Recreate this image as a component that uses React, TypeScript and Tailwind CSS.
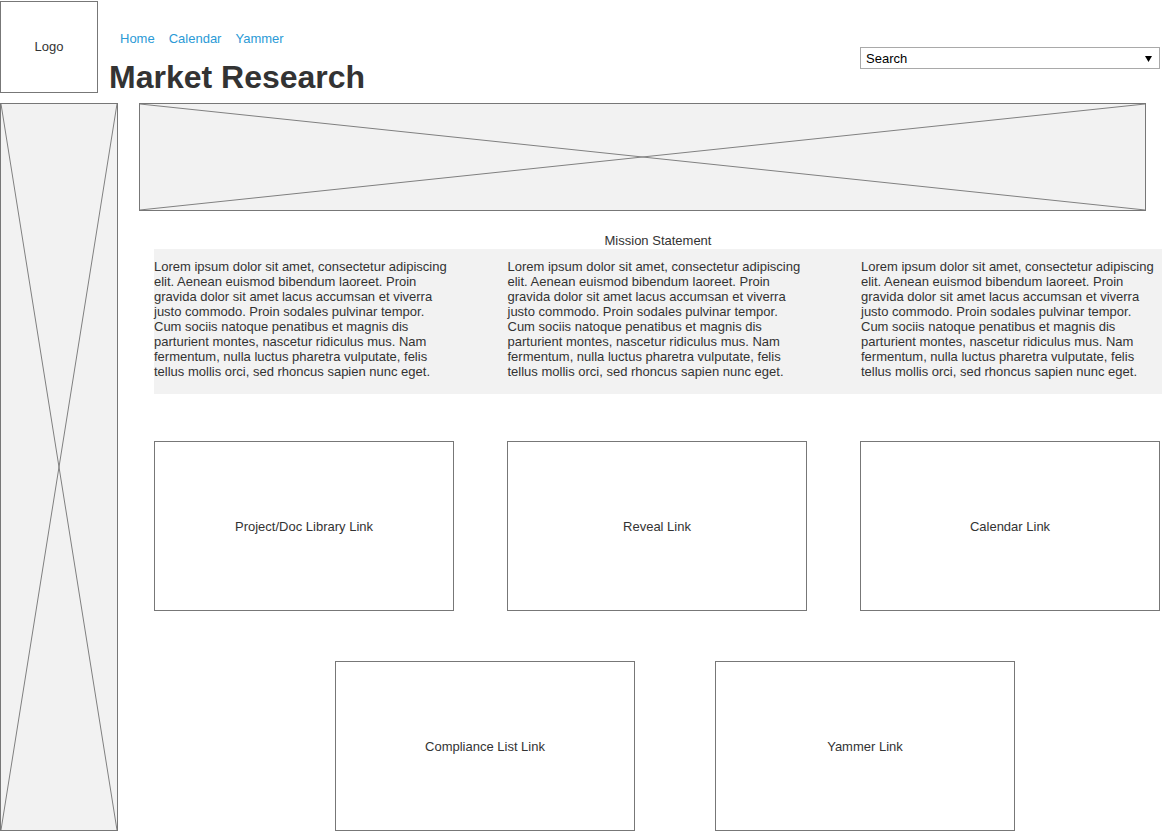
import React from "react"

const lorem =
  "Lorem ipsum dolor sit amet, consectetur adipiscing elit. Aenean euismod bibendum laoreet. Proin gravida dolor sit amet lacus accumsan et viverra justo commodo. Proin sodales pulvinar tempor. Cum sociis natoque penatibus et magnis dis parturient montes, nascetur ridiculus mus. Nam fermentum, nulla luctus pharetra vulputate, felis tellus mollis orci, sed rhoncus sapien nunc eget."

function Placeholder({ className }: { className: string }) {
  return (
    <div className={`relative border border-[#777] bg-[#f2f2f2] ${className}`}>
      <svg className="absolute inset-0 w-full h-full" viewBox="0 0 100 100" preserveAspectRatio="none">
        <line x1="0" y1="0" x2="100" y2="100" stroke="#808080" strokeWidth="1" vectorEffect="non-scaling-stroke" />
        <line x1="100" y1="0" x2="0" y2="100" stroke="#808080" strokeWidth="1" vectorEffect="non-scaling-stroke" />
      </svg>
    </div>
  )
}

function LinkBox({ label }: { label: string }) {
  return (
    <div className="w-[300px] h-[170px] border border-[#777] bg-white flex items-center justify-center pt-[2px] text-[13px]">
      {label}
    </div>
  )
}

export default function App() {
  return (
    <div className="w-[1162px] h-[833px] overflow-hidden bg-white text-[#333] font-['Liberation_Sans',Arial,sans-serif]">
      {/* header */}
      <div className="flex h-[103px]">
        <div className="mt-[1px] w-[98px] h-[92px] border border-[#777] flex items-center justify-center text-[13px]">
          Logo
        </div>
        <div className="ml-[11px] flex flex-col">
          <nav className="mt-[31px] ml-[11px] flex gap-[14px] text-[13px] leading-[15px] text-[#2b9ad6]">
            <a href="#">Home</a>
            <a href="#">Calendar</a>
            <a href="#">Yammer</a>
          </nav>
          <h1 className="mt-[13px] text-[32px] leading-[37px] font-bold">Market Research</h1>
        </div>
        <div className="ml-auto mr-[2px] mt-[47px] w-[300px] h-[22px] border border-[#a9a9a9] flex items-center justify-between pl-[5px] pr-[7px] pt-[1px] text-[13px] text-black">
          <span>Search</span>
          <svg width="7" height="6" viewBox="0 0 7 6">
            <path d="M0 0 L7 0 L3.5 6 Z" fill="#000" />
          </svg>
        </div>
      </div>

      {/* body */}
      <div className="flex">
        <Placeholder className="w-[118px] h-[728px] shrink-0" />
        <div className="ml-[21px] flex flex-col">
          <Placeholder className="w-[1007px] h-[108px]" />

          <div className="ml-[15px] w-[1008px]">
            <div className="mt-[22px] h-[16px] text-center text-[13px] leading-[15px]">Mission Statement</div>
            <div className="bg-[#f2f2f2] pt-[10px] pb-[15px] flex gap-[53.5px] text-[13px] leading-[15px]">
              <p className="w-[300px]">{lorem}</p>
              <p className="w-[300px]">{lorem}</p>
              <p className="w-[300px]">{lorem}</p>
            </div>

            <div className="mt-[47px] flex gap-[53px]">
              <LinkBox label="Project/Doc Library Link" />
              <LinkBox label="Reveal Link" />
              <LinkBox label="Calendar Link" />
            </div>

            <div className="mt-[50px] ml-[181px] flex gap-[80px]">
              <LinkBox label="Compliance List Link" />
              <LinkBox label="Yammer Link" />
            </div>
          </div>
        </div>
      </div>
    </div>
  )
}
